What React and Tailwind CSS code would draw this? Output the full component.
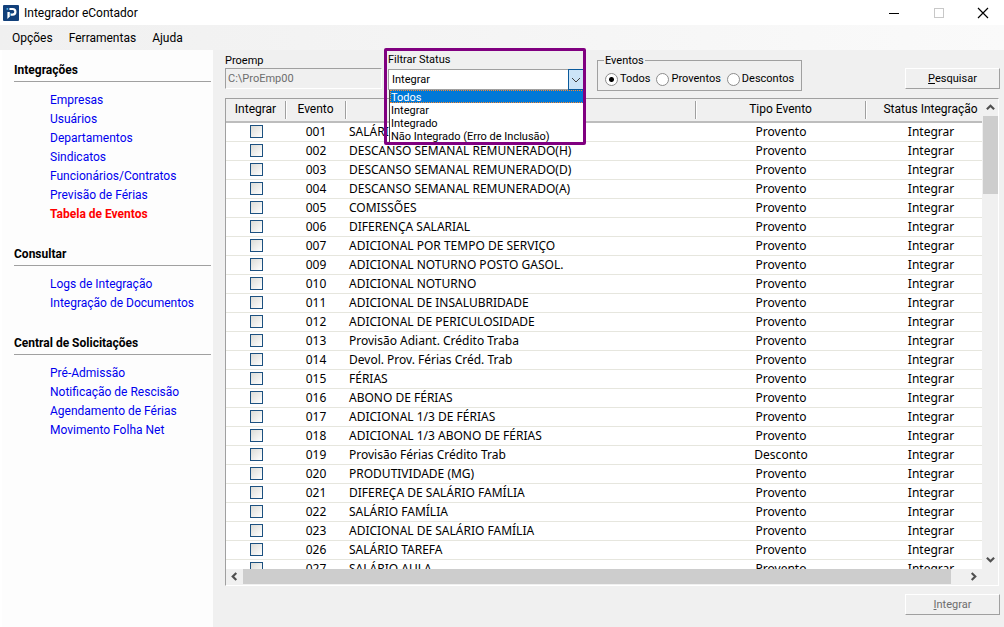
import React, { useState } from "react";

const menus = ["Opções", "Ferramentas", "Ajuda"];

const sections = [
  {
    title: "Integrações",
    links: [
      "Empresas",
      "Usuários",
      "Departamentos",
      "Sindicatos",
      "Funcionários/Contratos",
      "Previsão de Férias",
      "Tabela de Eventos",
    ],
  },
  {
    title: "Consultar",
    links: ["Logs de Integração", "Integração de Documentos"],
  },
  {
    title: "Central de Solicitações",
    links: [
      "Pré-Admissão",
      "Notificação de Rescisão",
      "Agendamento de Férias",
      "Movimento Folha Net",
    ],
  },
];

const statusOptions = [
  "Todos",
  "Integrar",
  "Integrado",
  "Não Integrado (Erro de Inclusão)",
];

const eventos = [
  ["001", "SALÁRIO", "Provento"],
  ["002", "DESCANSO SEMANAL REMUNERADO(H)", "Provento"],
  ["003", "DESCANSO SEMANAL REMUNERADO(D)", "Provento"],
  ["004", "DESCANSO SEMANAL REMUNERADO(A)", "Provento"],
  ["005", "COMISSÕES", "Provento"],
  ["006", "DIFERENÇA SALARIAL", "Provento"],
  ["007", "ADICIONAL POR TEMPO DE SERVIÇO", "Provento"],
  ["009", "ADICIONAL NOTURNO POSTO GASOL.", "Provento"],
  ["010", "ADICIONAL NOTURNO", "Provento"],
  ["011", "ADICIONAL DE INSALUBRIDADE", "Provento"],
  ["012", "ADICIONAL DE PERICULOSIDADE", "Provento"],
  ["013", "Provisão Adiant. Crédito Traba", "Provento"],
  ["014", "Devol. Prov. Férias Créd. Trab", "Provento"],
  ["015", "FÉRIAS", "Provento"],
  ["016", "ABONO DE FÉRIAS", "Provento"],
  ["017", "ADICIONAL 1/3 DE FÉRIAS", "Provento"],
  ["018", "ADICIONAL 1/3 ABONO DE FÉRIAS", "Provento"],
  ["019", "Provisão Férias Crédito Trab", "Desconto"],
  ["020", "PRODUTIVIDADE (MG)", "Provento"],
  ["021", "DIFEREÇA DE SALÁRIO FAMÍLIA", "Provento"],
  ["022", "SALÁRIO FAMÍLIA", "Provento"],
  ["023", "ADICIONAL DE SALÁRIO FAMÍLIA", "Provento"],
  ["026", "SALÁRIO TAREFA", "Provento"],
  ["027", "SALÁRIO AULA", "Provento"],
];

const arrows = {
  up: "M1 7 L5 3 L9 7",
  down: "M1 3 L5 7 L9 3",
  left: "M7 1 L3 5 L7 9",
  right: "M3 1 L7 5 L3 9",
};

const Arrow = ({ dir }) => (
  <svg width="9" height="9" viewBox="0 0 10 10" fill="none">
    <path d={arrows[dir]} stroke="#505050" strokeWidth="2.4" />
  </svg>
);

const TitleBar = () => (
  <header className="flex h-[25px] shrink-0 items-center bg-white pl-[3px]">
    <svg width="16" height="16" viewBox="0 0 16 16">
      <rect width="16" height="16" rx="1" fill="#12407a" />
      <path
        d="M6.4 4 H9.6 A2.7 2.7 0 0 1 9.6 9.6 H7.6"
        fill="none"
        stroke="#fff"
        strokeWidth="2.2"
      />
      <path d="M4.4 7 H6.8 V11.5 L4.4 14 Z" fill="#fff" />
      <path d="M3.6 3 H5.2 V4.8 H3.6 Z" fill="#4fb3e8" />
      <path d="M6.8 8.8 L8.6 8 L6.8 11.5 Z" fill="#4fb3e8" />
    </svg>
    <h1 className="flex-1 pl-[5px] text-[12px]">Integrador eContador</h1>
    <button aria-label="Minimizar" className="flex h-full w-[45px] items-center justify-center">
      <svg width="10" height="10" viewBox="0 0 10 10">
        <path d="M0 5.5 H10" stroke="#000" />
      </svg>
    </button>
    <button aria-label="Maximizar" className="flex h-full w-[46px] items-center justify-center" disabled>
      <svg width="10" height="10" viewBox="0 0 10 10">
        <rect x="0.5" y="0.5" width="9" height="9" fill="none" stroke="#c8c8c8" />
      </svg>
    </button>
    <button aria-label="Fechar" className="flex h-full w-[42px] items-center justify-center">
      <svg width="12" height="12" viewBox="0 0 12 12">
        <path d="M1 1 L11 11 M11 1 L1 11" stroke="#000" strokeWidth="1.2" />
      </svg>
    </button>
  </header>
);

const Sidebar = () => (
  <aside className="flex w-[213px] shrink-0 flex-col gap-[21px] border-l-2 border-white bg-[#fdfdfd] pt-[11px] pr-[2px] pl-3 text-[12px]">
    {sections.map((section) => (
      <section key={section.title}>
        <h2 className="border-b border-[#a0a0a0] pb-[2px] leading-[18px] font-bold">
          {section.title}
        </h2>
        <ul className="pt-[9px] pl-9">
          {section.links.map((link) => (
            <li key={link} className="leading-[19px] whitespace-nowrap">
              <a
                href="#"
                className={
                  link === "Tabela de Eventos"
                    ? "font-bold text-[#ff0000]"
                    : "text-[#0000ee]"
                }
              >
                {link}
              </a>
            </li>
          ))}
        </ul>
      </section>
    ))}
  </aside>
);

const StatusFilter = () => {
  const [status, setStatus] = useState("Integrar");

  return (
    <div className="relative z-10 ml-[6px] w-[196px]">
      <label htmlFor="status" className="block leading-[18px]">
        Filtrar Status
      </label>
      <div className="relative">
        <select
          id="status"
          value={status}
          onChange={(e) => setStatus(e.target.value)}
          className="block h-[21px] w-full appearance-none border border-[#a0a0a0] bg-white pt-px pl-[3px]"
        >
          {statusOptions.map((option) => (
            <option key={option}>{option}</option>
          ))}
        </select>
        <span className="pointer-events-none absolute inset-y-0 right-0 flex w-4 items-center justify-center border border-[#0a5a9c] bg-[#cce4f7]">
          <svg width="10" height="6" viewBox="0 0 10 6" className="shrink-0" fill="none">
            <path d="M1 1 L5 5 L9 1" stroke="#404040" />
          </svg>
        </span>
      </div>

      {/* Lista aberta do filtro */}
      <ul
        role="listbox"
        className="absolute top-full right-0 left-px border-l border-[#444] bg-white leading-[15px]"
      >
        {statusOptions.map((option) => (
          <li
            key={option}
            role="option"
            aria-selected={option === "Todos"}
            onClick={() => setStatus(option)}
            className={
              option === "Todos"
                ? "h-[13px] bg-[#0078d7] pl-px text-white outline-1 -outline-offset-1 outline-dotted outline-[#ff8728]"
                : "h-[13px] pl-px whitespace-nowrap"
            }
          >
            {option}
          </li>
        ))}
      </ul>

      {/* Destaque em volta do filtro */}
      <div className="pointer-events-none absolute -top-[3px] -right-[2px] -left-1 h-[97px] rounded-xs border-3 border-[#800080]" />
    </div>
  );
};

const Toolbar = () => {
  const [tipo, setTipo] = useState("Todos");

  return (
    <div className="flex h-12 shrink-0 items-start text-[11px]">
      <div className="w-[157px] pt-[2px]">
        <label htmlFor="proemp" className="block pt-px leading-[15px]">
          Proemp
        </label>
        <input
          id="proemp"
          type="text"
          readOnly
          value="C:\ProEmp00"
          className="block h-[21px] w-full border border-t-[#a0a0a0] border-r-white border-b-white border-l-[#a0a0a0] pl-[2px] text-[#6d6d6d]"
        />
      </div>
      <div className="pt-px">
        <StatusFilter />
      </div>
      <fieldset className="mt-1 ml-[13px] flex h-[37px] w-[205px] border border-[#a0a0a0] px-[7px] pt-px">
        <legend className="-ml-px px-px leading-[13px]">Eventos</legend>
        <div className="flex items-center justify-between gap-[6px]">
          {["Todos", "Proventos", "Descontos"].map((item) => (
            <label key={item} className="flex items-center gap-[2px] leading-4">
              <input
                type="radio"
                name="tipo"
                checked={tipo === item}
                onChange={() => setTipo(item)}
                className="size-[13px] appearance-none rounded-full border border-[#8c8c8c] bg-white checked:bg-[radial-gradient(circle,#000_2px,#fff_3px)]"
              />
              {item}
            </label>
          ))}
        </div>
      </fieldset>
      <button className="mt-[18px] ml-auto h-[21px] w-[95px] border border-t-white border-r-[#a0a0a0] border-b-[#a0a0a0] border-l-white pt-px">
        <span className="underline">P</span>esquisar
      </button>
    </div>
  );
};

const HeaderCell = ({ className, children }) => (
  <th scope="col" className={`h-[23px] p-0 font-normal ${className}`}>
    <div className="h-[18px] border-r border-[#a0a0a0] leading-4 whitespace-nowrap shadow-[1px_0_0_#fff]">
      {children}
    </div>
  </th>
);

const EventosGrid = () => (
  <div className="mr-px flex min-h-0 flex-1 flex-col border border-t-[#a0a0a0] border-r-white border-b-white border-l-[#a0a0a0]">
    <div className="flex min-h-0 flex-1">
      <div className="min-w-0 flex-1 overflow-hidden bg-white">
        <table className="w-[calc(100%+14px)] table-fixed border-collapse text-[12px]">
          <thead className="border-b-2 border-[#bdbdbd] bg-[#f0f0f0]">
            <tr>
              <HeaderCell className="w-[60px]">Integrar</HeaderCell>
              <HeaderCell className="w-[60px]">Evento</HeaderCell>
              <HeaderCell className="w-auto" />
              <HeaderCell className="w-[170px]">Tipo Evento</HeaderCell>
              <HeaderCell className="w-[130px]">Status Integração</HeaderCell>
            </tr>
          </thead>
          <tbody className="font-['Noto_Sans',sans-serif]">
            {eventos.map(([codigo, descricao, tipo]) => (
              <tr
                key={codigo}
                className="border-b border-[#e6e6de] text-center leading-[18px] whitespace-nowrap"
              >
                <td className="p-0 pb-px">
                  <input
                    type="checkbox"
                    aria-label={codigo}
                    className="mx-auto block size-[13px] appearance-none border border-[#1c5180] bg-linear-to-br from-[#dcdcd7] to-white checked:bg-[#1c5180]"
                  />
                </td>
                <td className="p-0">{codigo}</td>
                <td className="p-0 pl-[3px] text-left">{descricao}</td>
                <td className="p-0">{tipo}</td>
                <td className="p-0">Integrar</td>
              </tr>
            ))}
          </tbody>
        </table>
      </div>

      {/* Rolagem vertical */}
      <div className="flex w-4 shrink-0 flex-col items-center bg-[#f0f0f0]">
        <div className="flex h-[17px] items-center">
          <Arrow dir="up" />
        </div>
        <div className="h-[78px] w-[15px] bg-[#cdcdcd]" />
        <div className="mt-auto flex h-[19px] items-center">
          <Arrow dir="down" />
        </div>
      </div>
    </div>

    {/* Rolagem horizontal */}
    <div className="flex h-4 shrink-0 items-start bg-[#f0f0f0] pr-4">
      <div className="flex h-[15px] w-[17px] items-center justify-center">
        <Arrow dir="left" />
      </div>
      <div className="mr-[14px] h-[15px] flex-1 bg-[#cdcdcd]" />
      <div className="flex h-[15px] w-[17px] items-center justify-center">
        <Arrow dir="right" />
      </div>
    </div>
  </div>
);

const App = () => (
  <div className="flex h-screen flex-col overflow-hidden bg-[#f0f0f0] font-['Roboto',sans-serif] text-black">
    <TitleBar />
    <nav className="flex h-[25px] shrink-0 items-center gap-4 bg-linear-to-r from-[#f0f0f0] to-[#fafafa] pl-3 text-[12px]">
      {menus.map((menu) => (
        <button key={menu}>{menu}</button>
      ))}
    </nav>
    <div className="flex min-h-0 flex-1">
      <Sidebar />
      <main className="flex min-w-0 flex-1 flex-col pr-1 pl-3">
        <Toolbar />
        <EventosGrid />
        <footer className="flex h-[41px] shrink-0 justify-end pt-2 text-[11px]">
          <button
            disabled
            className="h-[21px] w-[95px] border border-t-white border-r-[#a0a0a0] border-b-[#a0a0a0] border-l-white pt-px text-[#6d6d6d]"
          >
            <span className="underline">I</span>ntegrar
          </button>
        </footer>
      </main>
    </div>
  </div>
);

export default App;
